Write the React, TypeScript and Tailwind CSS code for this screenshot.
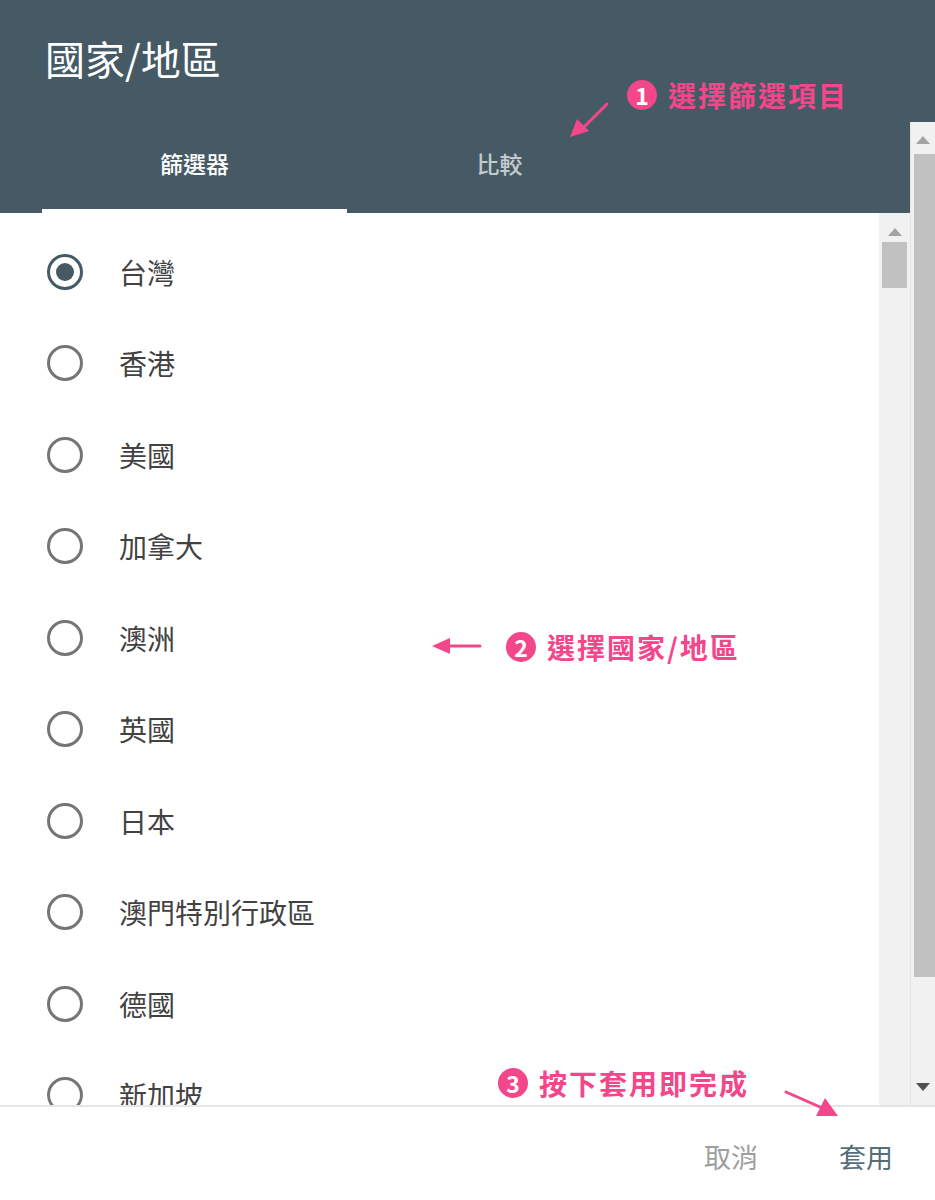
import React from 'react'

const COUNTRIES = ['台灣', '香港', '美國', '加拿大', '澳洲', '英國', '日本', '澳門特別行政區', '德國', '新加坡']

const FONT = "font-['Noto_Sans_CJK_TC','Noto_Sans',sans-serif]"

function Radio({ checked }: { checked: boolean }) {
  return (
    <span
      className={`flex h-[36px] w-[36px] shrink-0 items-center justify-center rounded-full border-[3px] ${
        checked ? 'border-[#455a64]' : 'border-[#757575]'
      }`}
    >
      {checked && <span className="h-[18px] w-[18px] rounded-full bg-[#455a64]" />}
    </span>
  )
}

function Badge({ n }: { n: number }) {
  return (
    <span className="flex h-[30px] w-[30px] shrink-0 items-center justify-center rounded-full bg-[#f4468a] text-[23px] font-bold leading-none text-white">
      {n}
    </span>
  )
}

function Note({ n, text, className }: { n: number; text: string; className: string }) {
  return (
    <div className={`absolute flex items-center gap-[11px] ${className}`}>
      <Badge n={n} />
      <span className="text-[28px] font-bold leading-none tracking-[2px] text-[#f4468a]">{text}</span>
    </div>
  )
}

function ArrowUp({ color }: { color: string }) {
  return (
    <svg width="14" height="8" viewBox="0 0 14 8" className="mx-auto">
      <path d="M0 8 L7 0 L14 8 Z" fill={color} />
    </svg>
  )
}

function ArrowDown({ color }: { color: string }) {
  return (
    <svg width="14" height="8" viewBox="0 0 14 8" className="mx-auto">
      <path d="M0 0 L14 0 L7 8 Z" fill={color} />
    </svg>
  )
}

export default function App() {
  return (
    <div className={`relative flex h-[1200px] w-[935px] flex-col overflow-hidden bg-white ${FONT}`}>
      {/* Title bar */}
      <header className="h-[122px] shrink-0 bg-[#455a64] pl-[45px] pt-[33px]">
        <h1 className="text-[40px] font-normal leading-[50px] text-white">國家/地區</h1>
      </header>

      <div className="flex min-h-0 flex-1">
        <div className="flex w-[910px] flex-col">
          {/* Tabs */}
          <nav className="flex h-[91px] shrink-0 bg-[#455a64] pl-[42px]">
            <button className="relative flex w-[305px] items-center justify-center pb-[8px] text-[23px] font-medium text-white">
              篩選器
              <span className="absolute bottom-0 left-0 right-0 h-[4px] bg-white" />
            </button>
            <button className="flex w-[305px] items-center justify-center pb-[8px] text-[23px] font-medium text-white/70">
              比較
            </button>
          </nav>

          {/* List */}
          <div className="flex min-h-0 flex-1">
            <ul className="flex-1 overflow-hidden pt-[13px]">
              {COUNTRIES.map((c, i) => (
                <li key={c} className="flex h-[91.5px] items-center gap-[36px] pl-[47px]">
                  <Radio checked={i === 0} />
                  <span className="text-[28px] leading-none text-[#424242]">{c}</span>
                </li>
              ))}
            </ul>
            {/* inner scrollbar */}
            <div className="flex w-[31px] flex-col bg-[#f1f1f1] pt-[15px]">
              <ArrowUp color="#a3a3a3" />
              <div className="mx-auto mt-[6px] h-[46px] w-[25px] bg-[#c1c1c1]" />
            </div>
          </div>
        </div>

        {/* outer scrollbar */}
        <div className="flex w-[25px] flex-col border-l border-[#e6e6e6] bg-[#f1f1f1] pt-[14px]">
          <ArrowUp color="#a3a3a3" />
          <div className="ml-[3px] mt-[10px] h-[823px] bg-[#c1c1c1]" />
          <div className="mt-[106px]">
            <ArrowDown color="#505050" />
          </div>
        </div>
      </div>

      {/* Footer */}
      <footer className="flex h-[95px] shrink-0 items-center justify-end gap-[81px] border-t-2 border-[#e6e6e6] pr-[42px] pt-[8px]">
        <button className="text-[27px] text-[#9e9e9e]">取消</button>
        <button className="text-[27px] text-[#546e7a]">套用</button>
      </footer>

      {/* Annotations */}
      <Note n={1} text="選擇篩選項目" className="left-[627px] top-[80px]" />
      <Note n={2} text="選擇國家/地區" className="left-[506px] top-[632px]" />
      <Note n={3} text="按下套用即完成" className="left-[498px] top-[1068px]" />

      <svg className="pointer-events-none absolute inset-0" width="935" height="1200">
        <g stroke="#f4468a" strokeWidth="3" strokeLinecap="round" fill="#f4468a">
          <line x1="607" y1="104" x2="583" y2="128" />
          <path d="M570 137 L577 119 L589 131 Z" stroke="none" />
          <line x1="480" y1="646" x2="448" y2="646" />
          <path d="M432 646 L450 638 L450 654 Z" stroke="none" />
          <line x1="786" y1="1092" x2="820" y2="1107" />
          <path d="M838 1116 L816 1116 L825 1098 Z" stroke="none" />
        </g>
      </svg>
    </div>
  )
}
